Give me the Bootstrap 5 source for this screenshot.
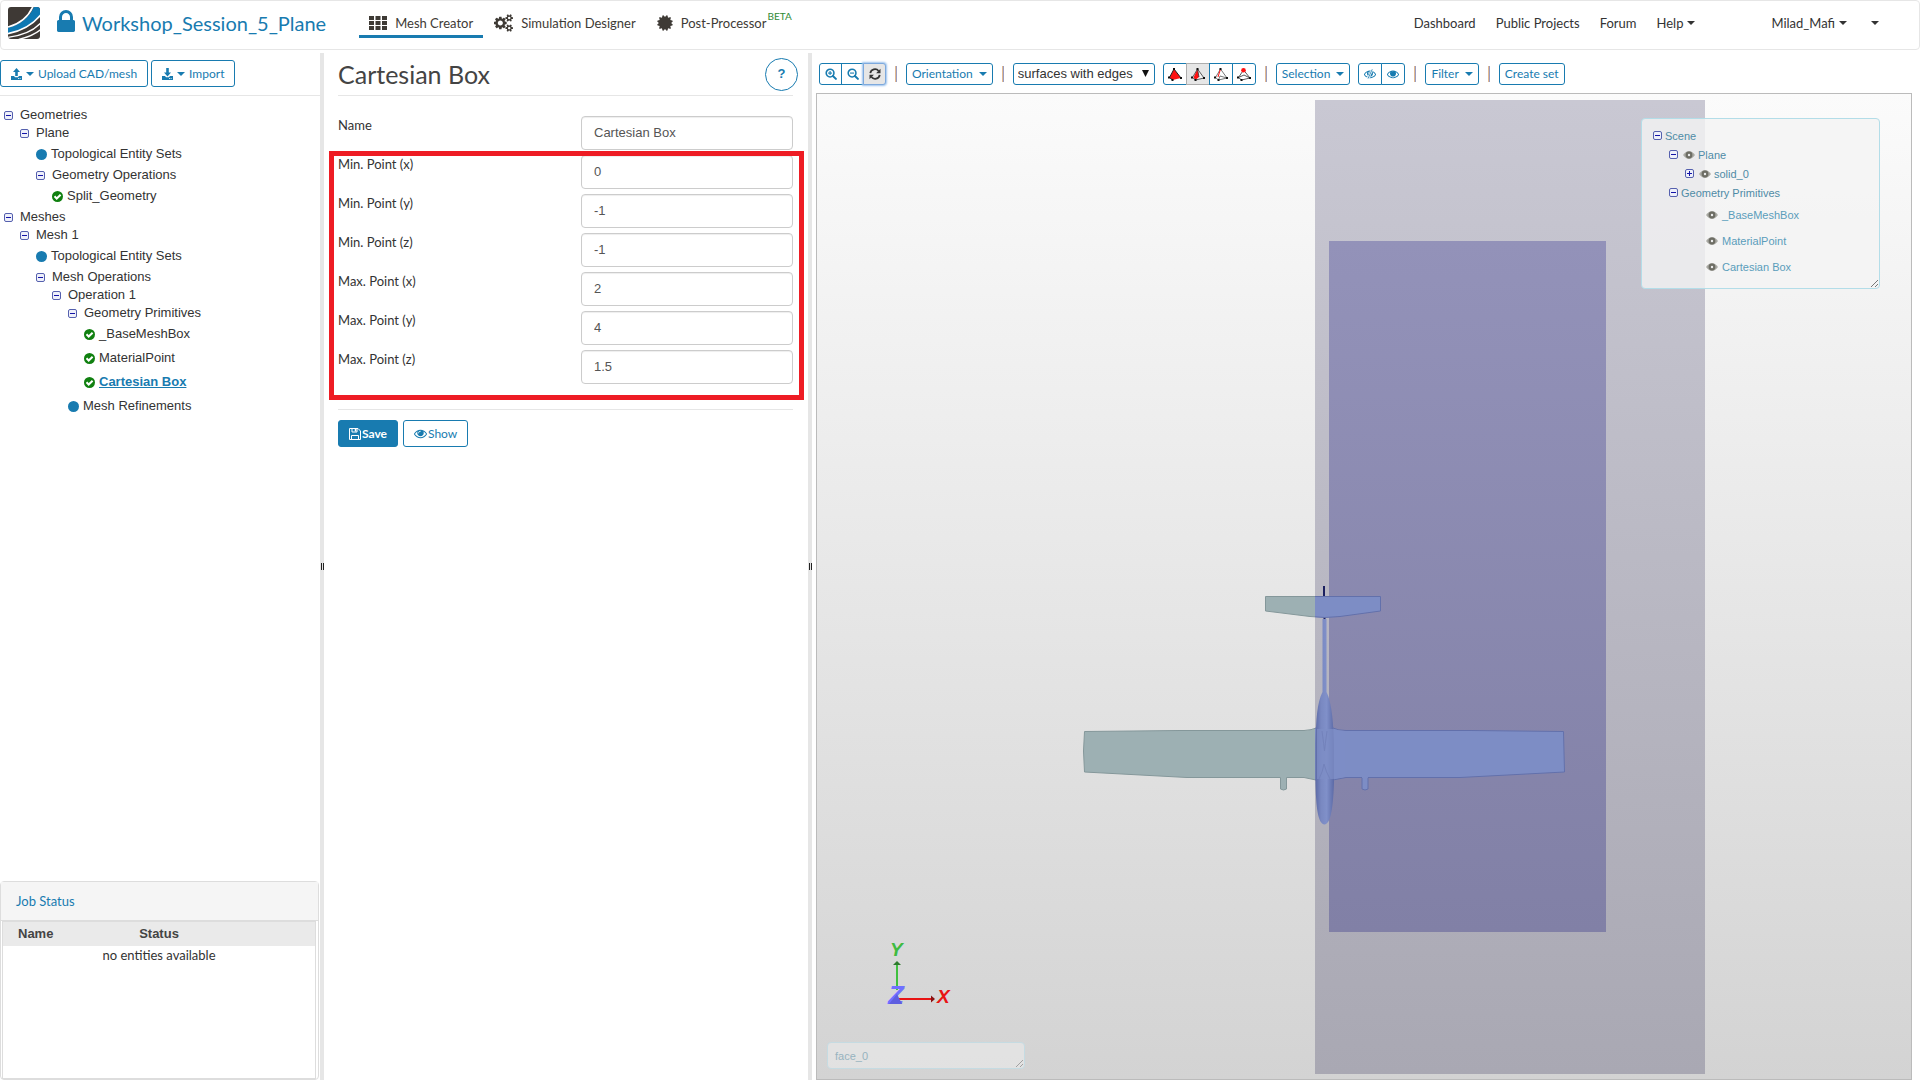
<!DOCTYPE html>
<html lang="en">
<head>
<meta charset="utf-8">
<meta name="viewport" content="width=device-width, initial-scale=1">
<title>Workshop_Session_5_Plane</title>
<link href="https://cdn.jsdelivr.net/npm/bootstrap@5.3.0/dist/css/bootstrap.min.css" rel="stylesheet">
<style>
:root{--brand:#187bb0;--ink:#3e3a35;--line:#e6e6e6}
body{font:13px/20px Lato,sans-serif;color:#333;background:#fff}
a{color:inherit;text-decoration:none}
svg{display:block;flex:none}
.topbar{height:50px;border:1px solid var(--line);border-radius:4px;padding:0 40px 0 7px}
.project-name{font-size:20px;line-height:28px;color:var(--brand);gap:7px;margin:0 33px 4px 17px}
.mode-links{gap:1px}
.mode-link{height:31px;padding:3px 10px 0;margin-bottom:5px;border-bottom:3px solid transparent;color:var(--ink)}
.mode-link.active{border-color:var(--brand)}
.beta-tag{font-size:10px;line-height:12px;color:#2f8a35;margin:-14px 0 0 1px}
.main-links{gap:20px}
.user-link{margin-left:56px}
.tri{width:0;height:0;border:4px solid transparent;border-top-color:currentColor;border-bottom:0;display:inline-block}
.workspace{min-height:0;padding-top:3px}
.side-col{width:320px;flex:none}
.form-col{width:484px;flex:none;padding:0 15px 0 14px}
.splitter{width:4px;flex:none;background:var(--line)}
.splitter span{width:3px;height:7px;border:solid #222;border-width:0 1px}
.btn{border-radius:3px;font-family:Lato,sans-serif;line-height:18px;font-size:12px}
.btn-line{color:var(--brand);border-color:var(--brand);background:#fff}
.btn-fill{color:#fff;border-color:var(--brand);background:var(--brand);font-weight:700}
.btn-std{height:27px;padding:0 10px}
.side-tools{height:43px;border-bottom:1px solid var(--line);padding-top:7px;gap:3px}
.tree,.tree ul{list-style:none;margin:0;padding:0;font-family:"Liberation Sans",sans-serif}
.tree{font-size:13px;padding:10px 0 0 4px}
.tree ul{padding-left:16px}
.node,.leaf{display:flex;align-items:center;white-space:nowrap}
.node{height:18px;gap:7px}
.leaf{height:24px;gap:4px}
.leaf.current{color:var(--brand);font-weight:700;text-decoration:underline}
.job-panel{height:199px;width:319px;border:1px solid #ddd;border-radius:4px}
.job-title{height:39px;background:#f5f5f5;color:var(--brand);padding-left:15px;border-bottom:1px solid #ddd}
.job-body{flex:1;margin:0 2px 0 1px;border:1px solid #ddd}
.job-table{width:100%}
.job-table th{background:#eaeaea;font:700 13px/24px "Liberation Sans",sans-serif;color:#444;padding:0}
.job-table th:first-child{padding-left:15px}
.job-table td{padding:0;line-height:18px;text-align:center}
.form-head{height:43px;border-bottom:1px solid var(--line)}
.form-head h1{font-size:25px;line-height:36px;margin:0;color:#444}
.help-btn{width:33px;height:33px;border-radius:50%;border:1px solid var(--brand);background:#fff;color:var(--brand);font:700 13px/20px "Liberation Sans",sans-serif;margin-right:-5px}
.props-form{padding-top:20px}
.field-row{height:34px;margin-bottom:5px}
.field-row label{margin-top:-1px}
.field-row input{width:212px;height:34px;border:1px solid #ccc;border-radius:4px;font-family:"Liberation Sans",sans-serif;font-size:13px;color:#555;padding:0 12px 2px;box-shadow:inset 0 1px 1px rgba(0,0,0,.07)}
.marked{border:5px solid #ee1c24;inset:-4px -11px 9px -9px;pointer-events:none}
.marked-group{padding-bottom:20px}
.form-actions{border-top:1px solid var(--line);padding-top:10px;gap:5px}
.form-actions .btn{gap:1px}
.view-col{flex:1;min-width:0;padding:0 8px 0 4px}
.view-tools{height:40px;padding:10px 0 8px 3px}
.view-tools .btn{height:22px;padding:0 5px;gap:6px}
.view-tools .btn-group .btn{padding:0;width:24px}
.view-tools .zoom-group .btn{width:23px}
.view-tools .pressed{background:#e6e6e6;border-color:#adadad;color:#333}
.view-tools .focused{box-shadow:0 0 2px 1px #9cc3ee;border-color:#7da9dd}
.divider{width:2px;height:16px;background:linear-gradient(90deg,#e3b98f 50%,#9a9cc0 50%);margin:0 9px}
.render-mode{width:142px;height:22px;padding:0 4px;border:1px solid var(--brand);border-radius:3px;font-family:"Liberation Sans",sans-serif;font-size:13px;color:#333;appearance:none;background:#fff}
.render-arrow{right:6px;top:7px;pointer-events:none}
.viewport{flex:1;min-height:0;border:1px solid #bbb;background:linear-gradient(#fbfbfb,#d3d3d3)}
.float-panel{border:1px solid #b3dde8;border-radius:4px;background:rgba(244,244,244,.8);font-family:"Liberation Sans",sans-serif;font-size:11px;color:#4f8ba6}
.scene-panel{top:24px;right:31px;width:239px;height:171px;padding:7px 11px}
.scene-panel .tree{font-size:11px;padding:0}
.scene-panel .node{height:19px;gap:3px}
.scene-panel .leaf{height:26px;gap:4px;padding-left:21px;color:#5a9dbb}
.scene-panel .node svg+svg{margin:0 0 0 2px}
.pick-panel{left:10px;bottom:10px;width:198px;height:27px;padding:3px 7px;color:#97b3bf;background:rgba(240,240,240,.5);border-color:#c5dbe2}
.resize-grip{right:1px;bottom:1px}
.pick-panel .resize-grip{opacity:.6}
</style>
<script src="https://cdn.jsdelivr.net/npm/bootstrap@5.3.0/dist/js/bootstrap.bundle.min.js" defer></script>
</head>
<body class="d-flex flex-column vh-100 overflow-hidden">
<svg width="0" height="0" class="position-absolute" aria-hidden="true">
<symbol id="minus" viewBox="0 0 9 9"><rect x=".5" y=".5" width="8" height="8" rx="1.5" fill="#eef0fa" stroke="#5560ae"/><path d="M2 4.500h5" stroke="#1414a8"/></symbol>
<symbol id="plus" viewBox="0 0 9 9"><rect x=".5" y=".5" width="8" height="8" rx="1.500" fill="#eef0fa" stroke="#5560ae"/><path d="M2 4.500h5M4.500 2v5" stroke="#1414a8"/></symbol>
<symbol id="dot" viewBox="0 0 11 11"><circle cx="5.500" cy="5.500" r="5.500" fill="#187bb0"/></symbol>
<symbol id="ok" viewBox="0 0 11 11"><circle cx="5.500" cy="5.500" r="5.500" fill="#108010"/><path d="M2.500 5.300l2.200 2.200L8.600 3.700" fill="none" stroke="#fff" stroke-width="2"/></symbol>
<symbol id="eye" viewBox="0 0 1792 1792"><path fill="currentColor" d="M1664 960q-152-236-381-353 61 104 61 225 0 185-131.500 316.500t-316.500 131.500-316.500-131.500-131.500-316.500q0-121 61-225-229 117-381 353 133 205 333.500 326.500t434.500 121.500 434.500-121.500 333.500-326.500zm-720-384q0-20-14-34t-34-14q-125 0-214.500 89.500t-89.500 214.500q0 20 14 34t34 14 34-14 14-34q0-86 61-147t147-61q20 0 34-14t14-34zm848 384q0 34-20 69-140 230-376.500 368.500t-499.500 138.500-499.500-139-376.500-368q-20-35-20-69t20-69q140-229 376.500-368t499.500-139 499.500 139 376.500 368q20 35 20 69z"/></symbol>
<symbol id="eye-bold" viewBox="0 0 12 8"><path d="M0 4Q6-4 12 4Q6 12 0 4Z" fill="#a9a9a3"/><circle cx="6" cy="4" r="3.400" fill="#6d6d64"/><circle cx="6" cy="4" r="1.200" fill="#eee"/></symbol>
<symbol id="zoom-glass" viewBox="0 0 13 13"><circle cx="5.500" cy="5.500" r="4.200" fill="none" stroke="currentColor" stroke-width="1.700"/><path d="M8.600 8.600l3.200 3.200" stroke="currentColor" stroke-width="2.200" stroke-linecap="round"/><path d="M3.300 5.500h4.400" stroke="currentColor" stroke-width="1.200"/></symbol>
<symbol id="tray" viewBox="0 0 11 11"><path d="M0 7h3l1 1.200h3L8 7h3v4H0z" fill="currentColor"/><path d="M7 9.500h.8M8.700 9.500h.8" stroke="#fff"/></symbol>
<symbol id="grip" viewBox="0 0 8 8"><path d="M1 8L8 1M5 8L8 5" stroke="#777" stroke-width="1"/></symbol>
</svg>

<header class="topbar d-flex align-items-center flex-shrink-0">
  <a href="#" aria-label="Home" class="mb-1"><svg width="32" height="32" viewBox="0 0 96 96"><defs><clipPath id="logoClip"><rect width="96" height="96" rx="9"/></clipPath></defs><g clip-path="url(#logoClip)"><rect width="96" height="96" fill="#3e3935"/><path d="M0 62Q56 48 78 0H96V26Q62 66 0 80Z" fill="#0e78b2"/><g fill="none" stroke="#fff" stroke-width="5"><path d="M0 60Q54 46 75-2"/><path d="M0 80Q62 68 98 24"/><path d="M0 91Q66 82 98 48" stroke-width="4"/><path d="M32 97Q74 88 98 68" stroke-width="4"/></g></g></svg></a>
  <a href="#" class="d-flex align-items-center project-name"><svg width="18" height="22" viewBox="320 128 1152 1408" class="mb-1"><path fill="currentColor" d="M640 768h512v-192q0-106-75-181t-181-75-181 75-75 181v192zm832 96v576q0 40-28 68t-68 28h-960q-40 0-68-28t-28-68v-576q0-40 28-68t68-28h32v-192q0-184 132-316t316-132 316 132 132 316v192h32q40 0 68 28t28 68z"/></svg>Workshop_Session_5_Plane</a>
  <nav class="mode-links d-flex" aria-label="Mode">
    <a href="#" class="mode-link active d-flex align-items-center"><svg width="18" height="14" viewBox="0 0 18 14" class="me-2" fill="currentColor"><path d="M0 0h5v4H0zM6.500 0h5v4h-5zM13 0h5v4h-5zM0 5h5v4H0zM6.500 5h5v4h-5zM13 5h5v4h-5zM0 10h5v4H0zM6.500 10h5v4h-5zM13 10h5v4h-5z"/></svg>Mesh Creator</a>
    <a href="#" class="mode-link d-flex align-items-center"><svg width="19" height="18" viewBox="0 0 1920 1792" class="me-2"><path fill="currentColor" d="M896 896q0-106-75-181t-181-75-181 75-75 181 75 181 181 75 181-75 75-181zm768 512q0-52-38-90t-90-38-90 38-38 90q0 53 37.500 90.500t90.500 37.500 90.500-37.500 37.500-90.500zm0-1024q0-52-38-90t-90-38-90 38-38 90q0 53 37.500 90.500t90.500 37.500 90.500-37.500 37.500-90.500zm-384 421v185q0 10-7 19.500t-16 10.500l-155 24q-11 35-32 76 34 48 90 115 7 11 7 20 0 12-7 19-23 30-82.500 89.500t-78.500 59.500q-11 0-21-7l-115-90q-37 19-77 31-11 108-23 155-7 24-30 24h-186q-11 0-20-7.500t-10-17.500l-23-153q-34-10-75-31l-118 89q-7 7-20 7-11 0-21-8-144-133-144-160 0-9 7-19 10-14 41-53t47-61q-23-44-35-82l-152-24q-10-1-17-9.500t-7-19.500v-185q0-10 7-19.500t16-10.500l155-24q11-35 32-76-34-48-90-115-7-11-7-20 0-12 7-20 22-30 82-89t79-59q11 0 21 7l115 90q34-18 77-32 11-108 23-154 7-24 30-24h186q11 0 20 7.500t10 17.500l23 153q34 10 75 31l118-89q8-7 20-7 11 0 21 8 144 133 144 160 0 8-7 19-12 16-42 54t-45 60q23 48 34 82l152 23q10 2 17 10.500t7 19.500zm640 533v140q0 16-149 31-12 27-30 52 51 113 51 138 0 4-4 7-122 71-124 71-8 0-46-47t-52-68q-20 2-30 2t-30-2q-14 21-52 68t-46 47q-2 0-124-71-4-3-4-7 0-25 51-138-18-25-30-52-149-15-149-31v-140q0-16 149-31 13-29 30-52-51-113-51-138 0-4 4-7 4-2 35-20t59-34 30-16q8 0 46 46.500t52 67.500q20-2 30-2t30 2q51-71 92-112l6-2q4 0 124 70 4 3 4 7 0 25-51 138 17 23 30 52 149 15 149 31zm0-1024v140q0 16-149 31-12 27-30 52 51 113 51 138 0 4-4 7-122 71-124 71-8 0-46-47t-52-68q-20 2-30 2t-30-2q-14 21-52 68t-46 47q-2 0-124-71-4-3-4-7 0-25 51-138-18-25-30-52-149-15-149-31v-140q0-16 149-31 13-29 30-52-51-113-51-138 0-4 4-7 4-2 35-20t59-34 30-16q8 0 46 46.500t52 67.500q20-2 30-2t30 2q51-71 92-112l6-2q4 0 124 70 4 3 4 7 0 25-51 138 17 23 30 52 149 15 149 31z"/></svg>Simulation Designer</a>
    <a href="#" class="mode-link d-flex align-items-center"><svg width="16" height="16" viewBox="100 100 1592 1592" class="me-2"><path fill="currentColor" d="M1504 896l138 135q30 28 20 70-12 41-52 51l-188 48 53 186q12 41-19 70-29 31-70 19l-186-53-48 188q-10 40-51 52-12 2-19 2-31 0-51-22l-135-138-135 138q-28 30-70 20-41-11-51-52l-48-188-186 53q-41 12-70-19-31-29-19-70l53-186-188-48q-40-10-52-51-10-42 20-70l138-135-138-135q-30-28-20-70 12-41 52-51l188-48-53-186q-12-41 19-70 29-31 70-19l186 53 48-188q10-41 51-51 41-12 70 19l135 139 135-139q29-30 70-19 41 10 51 51l48 188 186-53q41-12 70 19 31 29 19 70l-53 186 188 48q40 10 52 51 10 42-20 70z"/></svg>Post-Processor<span class="beta-tag">BETA</span></a>
  </nav>
  <nav class="main-links d-flex align-items-center ms-auto mb-1" aria-label="Main">
    <a href="#">Dashboard</a><a href="#">Public Projects</a><a href="#">Forum</a>
    <a href="#" class="d-flex align-items-center gap-1">Help <i class="tri"></i></a>
    <a href="#" class="user-link d-flex align-items-center gap-1">Milad_Mafi <i class="tri"></i></a>
    <a href="#" aria-label="More" class="d-flex ms-1"><i class="tri"></i></a>
  </nav>
</header>

<main class="workspace d-flex flex-grow-1">
  <aside class="side-col d-flex flex-column">
    <div class="side-tools d-flex">
      <button type="button" class="btn btn-line btn-std d-flex align-items-center"><svg width="11" height="12" viewBox="0 0 11 12"><use href="#tray" y="1" width="11" height="11"/><path d="M5.500 0L9 4H6.800v4H4.200V4H2z" fill="currentColor"/></svg><i class="tri mx-1"></i>Upload CAD/mesh</button>
      <button type="button" class="btn btn-line btn-std d-flex align-items-center"><svg width="11" height="12" viewBox="0 0 11 12"><use href="#tray" y="1" width="11" height="11"/><path d="M5.500 8.500L2 4.500h2.200V0h2.600v4.500H9z" fill="currentColor"/></svg><i class="tri mx-1"></i>Import</button>
    </div>
    <ul class="tree flex-grow-1">
      <li><a href="#" class="node"><svg width="9" height="9"><use href="#minus"/></svg>Geometries</a>
        <ul><li><a href="#" class="node"><svg width="9" height="9"><use href="#minus"/></svg>Plane</a>
          <ul>
            <li><a href="#" class="leaf"><svg width="11" height="11"><use href="#dot"/></svg>Topological Entity Sets</a></li>
            <li><a href="#" class="node"><svg width="9" height="9"><use href="#minus"/></svg>Geometry Operations</a>
              <ul><li><a href="#" class="leaf"><svg width="11" height="11"><use href="#ok"/></svg>Split_Geometry</a></li></ul></li>
          </ul></li></ul></li>
      <li><a href="#" class="node"><svg width="9" height="9"><use href="#minus"/></svg>Meshes</a>
        <ul><li><a href="#" class="node"><svg width="9" height="9"><use href="#minus"/></svg>Mesh 1</a>
          <ul>
            <li><a href="#" class="leaf"><svg width="11" height="11"><use href="#dot"/></svg>Topological Entity Sets</a></li>
            <li><a href="#" class="node"><svg width="9" height="9"><use href="#minus"/></svg>Mesh Operations</a>
              <ul><li><a href="#" class="node"><svg width="9" height="9"><use href="#minus"/></svg>Operation 1</a>
                <ul>
                  <li><a href="#" class="node"><svg width="9" height="9"><use href="#minus"/></svg>Geometry Primitives</a>
                    <ul>
                      <li><a href="#" class="leaf"><svg width="11" height="11"><use href="#ok"/></svg>_BaseMeshBox</a></li>
                      <li><a href="#" class="leaf"><svg width="11" height="11"><use href="#ok"/></svg>MaterialPoint</a></li>
                      <li><a href="#" class="leaf current"><svg width="11" height="11"><use href="#ok"/></svg>Cartesian Box</a></li>
                    </ul></li>
                  <li><a href="#" class="leaf"><svg width="11" height="11"><use href="#dot"/></svg>Mesh Refinements</a></li>
                </ul></li></ul></li>
          </ul></li></ul></li>
    </ul>
    <section class="job-panel d-flex flex-column flex-shrink-0">
      <a href="#" class="job-title d-flex align-items-center">Job Status</a>
      <div class="job-body">
        <table class="job-table"><thead><tr><th scope="col" class="w-25">Name</th><th scope="col" class="w-50 text-center">Status</th><th class="w-25"></th></tr></thead>
        <tbody><tr><td colspan="3">no entities available</td></tr></tbody></table>
      </div>
    </section>
  </aside>

  <div class="splitter d-flex align-items-center justify-content-end"><span></span></div>

  <section class="form-col">
    <div class="form-head d-flex align-items-center justify-content-between">
      <h1 class="fw-normal">Cartesian Box</h1>
      <button type="button" class="help-btn">?</button>
    </div>
    <form class="props-form">
      <div class="field-row d-flex justify-content-between"><label for="fName">Name</label><input id="fName" value="Cartesian Box"></div>
      <div class="marked-group position-relative">
        <div class="field-row d-flex justify-content-between"><label for="minX">Min. Point (x)</label><input id="minX" value="0"></div>
        <div class="field-row d-flex justify-content-between"><label for="minY">Min. Point (y)</label><input id="minY" value="-1"></div>
        <div class="field-row d-flex justify-content-between"><label for="minZ">Min. Point (z)</label><input id="minZ" value="-1"></div>
        <div class="field-row d-flex justify-content-between"><label for="maxX">Max. Point (x)</label><input id="maxX" value="2"></div>
        <div class="field-row d-flex justify-content-between"><label for="maxY">Max. Point (y)</label><input id="maxY" value="4"></div>
        <div class="field-row d-flex justify-content-between"><label for="maxZ">Max. Point (z)</label><input id="maxZ" value="1.5"></div>
        <div class="marked position-absolute"></div>
      </div>
      <div class="d-flex form-actions">
        <button type="button" class="btn btn-fill btn-std d-flex align-items-center"><svg width="12" height="12" viewBox="0 0 12 12" fill="none" stroke="currentColor"><path d="M.5.5h8.500L11.500 3v8.500H.5z"/><path d="M3 .5v3.500h5V.5M2.500 11.500v-4h7v4"/><path d="M6.500 1v2.500" stroke-width="1.500"/></svg>Save</button>
        <button type="button" class="btn btn-line btn-std d-flex align-items-center"><svg width="13" height="13"><use href="#eye"/></svg>Show</button>
      </div>
    </form>
  </section>

  <div class="splitter d-flex align-items-center justify-content-end"><span></span></div>

  <section class="view-col d-flex flex-column">
    <div class="view-tools d-flex align-items-center">
      <div class="btn-group zoom-group">
        <button type="button" class="btn btn-line d-flex align-items-center justify-content-center" aria-label="Zoom in"><svg width="12" height="12" viewBox="0 0 13 13"><use href="#zoom-glass"/><path d="M5.500 3.300v4.400" stroke="currentColor" stroke-width="1.200"/></svg></button>
        <button type="button" class="btn btn-line d-flex align-items-center justify-content-center" aria-label="Zoom out"><svg width="12" height="12"><use href="#zoom-glass"/></svg></button>
        <button type="button" class="btn btn-line pressed focused d-flex align-items-center justify-content-center" aria-label="Reset view"><svg width="12" height="12" viewBox="0 0 12 12" fill="none" stroke="currentColor" stroke-width="1.800"><path d="M1.300 5.200A4.700 4.700 0 0 1 9.600 3M10.700 6.800A4.700 4.700 0 0 1 2.400 9"/><path d="M11.500.8v4.400H7.100zM.5 11.200V6.800h4.400z" fill="currentColor" stroke="none"/></svg></button>
      </div>
      <span class="divider"></span>
      <button type="button" class="btn btn-line d-flex align-items-center">Orientation <i class="tri"></i></button>
      <span class="divider"></span>
      <div class="position-relative me-2">
        <select class="render-mode d-block" aria-label="Render mode"><option>surfaces with edges</option></select>
        <svg class="render-arrow position-absolute" width="7" height="7" viewBox="0 0 7 7"><path d="M0 0h7L3.500 7z" fill="#111"/></svg>
      </div>
      <div class="btn-group">
        <button type="button" class="btn btn-line d-flex align-items-center justify-content-center" aria-label="Pick volumes"><svg width="14" height="13" viewBox="0 0 14 13"><path d="M6 1L1.500 9.500 4.500 12 13 10z" fill="#f11"/><path d="M6 1L1.500 9.500 4.500 12M6 1l7 9" stroke="#222" fill="none"/><path d="M5 0h2v2H5zM0 8.500h2v2H0zM3.500 11h2v2h-2zM12 9h2v2h-2z" fill="#111"/></svg></button>
        <button type="button" class="btn btn-line pressed d-flex align-items-center justify-content-center" aria-label="Pick faces"><svg width="14" height="13" viewBox="0 0 14 13"><path d="M6.500 1L1.500 9.500 4.500 12 13 10z" fill="#f4f4f4"/><path d="M6.500 1L2.500 9.500 4.500 12 8 9z" fill="#f11"/><path d="M6.500 1L1.500 9.500 4.500 12 13 10zM6.500 1L8 9" stroke="#333" stroke-width=".8" fill="none"/><path d="M5.500 0h2v2h-2zM0 8.500h2v2H0zM3.500 11h2v2h-2zM12 9h2v2h-2z" fill="#111"/></svg></button>
        <button type="button" class="btn btn-line d-flex align-items-center justify-content-center" aria-label="Pick edges"><svg width="14" height="13" viewBox="0 0 14 13"><path d="M6.500 1L1.500 9.500 4.500 12 13 10zM4.500 12L6 8l7 2" stroke="#555" stroke-width=".8" fill="none"/><path d="M6.500 1L4 9" stroke="#f11"/><path d="M5.500 0h2v2h-2zM0 8.500h2v2H0zM3.500 11h2v2h-2zM12 9h2v2h-2z" fill="#111"/></svg></button>
        <button type="button" class="btn btn-line d-flex align-items-center justify-content-center" aria-label="Pick points"><svg width="14" height="13" viewBox="0 0 14 13"><path d="M6.500 2L1.500 9.500 4.500 12 13 10zM1.500 9.500L7 7l6 3" stroke="#444" stroke-width=".9" fill="none"/><path d="M0 8.500h2v2H0zM3.500 11h2v2h-2zM12 9h2v2h-2z" fill="#111"/><circle cx="6.500" cy="2.300" r="2.300" fill="#f11"/></svg></button>
      </div>
      <span class="divider"></span>
      <button type="button" class="btn btn-line d-flex align-items-center me-2">Selection <i class="tri"></i></button>
      <div class="btn-group">
        <button type="button" class="btn btn-line d-flex align-items-center justify-content-center" aria-label="Hide"><svg width="12" height="12" viewBox="0 0 1792 1792"><use href="#eye"/><path d="M1280 130L560 1640" stroke="#fff" stroke-width="330"/><path d="M1230 200L600 1580" stroke="currentColor" stroke-width="120"/></svg></button>
        <button type="button" class="btn btn-line d-flex align-items-center justify-content-center" aria-label="Show"><svg width="12" height="12" viewBox="0 0 1792 1792"><use href="#eye"/><circle cx="896" cy="832" r="330" fill="currentColor"/></svg></button>
      </div>
      <span class="divider"></span>
      <button type="button" class="btn btn-line d-flex align-items-center">Filter <i class="tri"></i></button>
      <span class="divider"></span>
      <button type="button" class="btn btn-line">Create set</button>
    </div>
    <div class="viewport position-relative overflow-hidden">
      <svg class="w-100 h-100" viewBox="817 94 1094 985" role="img" aria-label="Plane model">
        <defs>
          <linearGradient id="gOuter" x1="0" y1="0" x2="0" y2="1"><stop stop-color="#c9c8d3"/><stop offset="1" stop-color="#a9a8b3"/></linearGradient>
          <linearGradient id="gInner" x1="0" y1="0" x2="0" y2="1"><stop stop-color="#9392b9"/><stop offset="1" stop-color="#8180a6"/></linearGradient>
          <linearGradient id="gSkin" gradientUnits="userSpaceOnUse" x1="1315" y1="0" x2="1316" y2="0"><stop stop-color="#9db0b3"/><stop offset="0" stop-color="#7d8dc5"/></linearGradient>
          <linearGradient id="gEdge" gradientUnits="userSpaceOnUse" x1="1315" y1="0" x2="1316" y2="0"><stop stop-color="#84979a"/><stop offset="0" stop-color="#6270ab"/></linearGradient>
          <linearGradient id="gBody" x1="0" x2="1" y1="0" y2="0"><stop stop-color="#5c6aa6"/><stop offset=".3" stop-color="#7988c1"/><stop offset=".6" stop-color="#8090c9"/><stop offset="1" stop-color="#5c6aa6"/></linearGradient>
        </defs>
        <rect x="1315" y="100" width="390" height="974" fill="url(#gOuter)"/>
        <rect x="1329" y="241" width="277" height="691" fill="url(#gInner)"/>
        <path d="M1324 586v11M1324.500 617v6" stroke="#1b2060" stroke-width="2"/>
        <g fill="url(#gSkin)" stroke="url(#gEdge)" stroke-width="1">
          <path d="M1280.500 771h6v18q-3 2-6 0zM1362 771h6v18q-3 2-6 0z"/>
          <path d="M1265.500 596.500H1380.500V611L1340 616.500q-15 2-30 0L1265.500 611z"/>
          <path d="M1084.500 731.500L1180 730.500H1304Q1312 730 1316 728H1333Q1338 730.500 1346 730.500H1470L1563.500 731.500 1564.500 772 1460 777.500H1346L1333 780H1316L1304 777.500H1187L1084.500 772 1083.500 751z"/>
        </g>
        <path d="M1322.500 619h4V692C1332 703 1333.500 725 1334 744V783C1333 807 1331 824 1324.500 824.500C1318 824 1316 807 1315.500 783V744C1316 719 1317 703 1322.500 692z" fill="url(#gBody)"/>
        <path d="M1317 729h15l13 2v46l-12 2h-16z" fill="#7d8dc5" opacity=".75"/>
        <path d="M1322 731q2 15 2.500 20 .5-5 2.500-20M1319 779q4-8 5-15 2 8 6 15" fill="none" stroke="#7382bb"/>
        <path d="M1280.500 778q1-8 3-13 2 5 3 13zM1362 778q1-8 3-13 2 5 3 13z" fill="url(#gSkin)"/>
        <g font-family="Liberation Sans, sans-serif" font-weight="700" font-style="italic" font-size="19">
          <path d="M897 990V964" stroke="#3fc03f" stroke-width="2"/><path d="M893 965l4-4 4 4z" fill="#2f7a2f"/>
          <path d="M898 999H932" stroke="#e81414" stroke-width="2"/><path d="M931 995.500l4 3.500-4 3.500z" fill="#8a1010"/>
          <text x="890" y="956" fill="#3fbb3f">Y</text>
          <text x="937" y="1003" fill="#e81414">X</text>
          <text x="888" y="1004" fill="#7070ff" font-size="26">Z</text>
          <path d="M889 1004l8-10 5 10z" fill="#5e5ee0"/>
        </g>
      </svg>
      <div class="float-panel scene-panel position-absolute">
        <ul class="tree">
          <li><a href="#" class="node"><svg width="9" height="9"><use href="#minus"/></svg>Scene</a>
            <ul>
              <li><a href="#" class="node"><svg width="9" height="9"><use href="#minus"/></svg><svg width="12" height="8"><use href="#eye-bold"/></svg>Plane</a>
                <ul><li><a href="#" class="node"><svg width="9" height="9"><use href="#plus"/></svg><svg width="12" height="8"><use href="#eye-bold"/></svg>solid_0</a></li></ul></li>
              <li><a href="#" class="node"><svg width="9" height="9"><use href="#minus"/></svg>Geometry Primitives</a>
                <ul>
                  <li><a href="#" class="leaf"><svg width="12" height="8"><use href="#eye-bold"/></svg>_BaseMeshBox</a></li>
                  <li><a href="#" class="leaf"><svg width="12" height="8"><use href="#eye-bold"/></svg>MaterialPoint</a></li>
                  <li><a href="#" class="leaf"><svg width="12" height="8"><use href="#eye-bold"/></svg>Cartesian Box</a></li>
                </ul></li>
            </ul></li>
        </ul>
        <svg class="resize-grip position-absolute" width="8" height="8"><use href="#grip"/></svg>
      </div>
      <div class="float-panel pick-panel position-absolute">face_0<svg class="resize-grip position-absolute" width="8" height="8"><use href="#grip"/></svg></div>
    </div>
  </section>
</main>
</body>
</html>
